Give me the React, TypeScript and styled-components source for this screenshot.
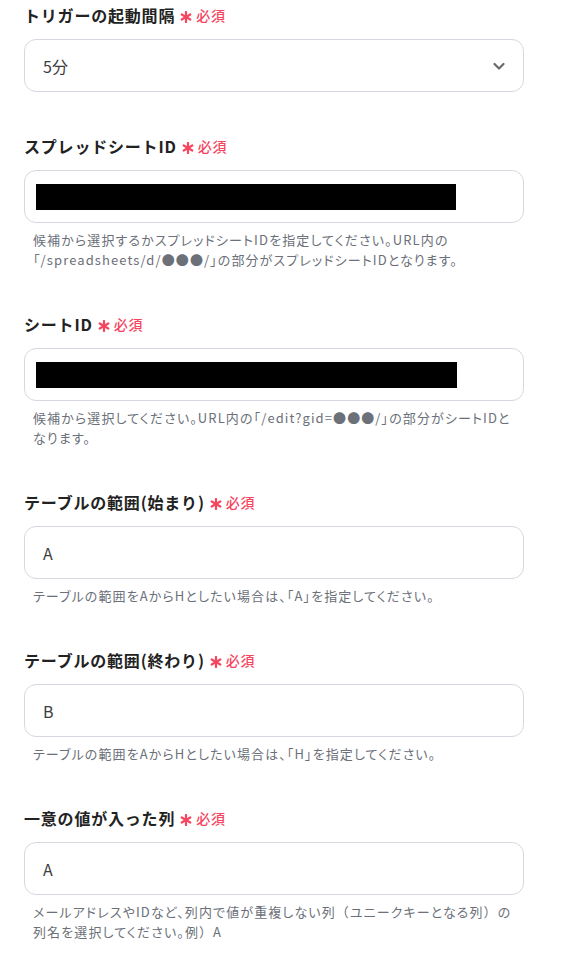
import React from 'react';
import styled, { createGlobalStyle } from 'styled-components';

const GlobalStyle = createGlobalStyle`
  html, body {
    margin: 0;
    padding: 0;
    background: #ffffff;
  }
  body {
    font-family: 'Noto Sans CJK JP', 'Noto Sans', sans-serif;
    -webkit-font-smoothing: antialiased;
  }
`;

const colors = {
  label: '#222222',
  required: '#f5455f',
  border: '#d5d8de',
  value: '#3d3d3d',
  help: '#6b7079',
  chevron: '#6a6a6a',
};

const Form = styled.div`
  width: 500px;
  padding: 3px 24px 0;
`;

const Field = styled.div`
  margin-bottom: 42px;
`;

const LabelRow = styled.div`
  display: flex;
  align-items: center;
  height: 24px;
  margin-bottom: 12px;
`;

const LabelText = styled.span`
  font-size: 16px;
  font-weight: 700;
  letter-spacing: 0.05em;
  color: ${colors.label};
  line-height: 24px;
`;

const Required = styled.span`
  display: inline-flex;
  align-items: center;
  margin-left: 5px;
  color: ${colors.required};
  font-size: 14px;
  font-weight: 500;
  letter-spacing: 0.06em;
  line-height: 24px;
`;

const AsteriskIcon = styled.svg`
  width: 12px;
  height: 12px;
  margin-right: 4px;
  margin-top: 3px;
`;

const Box = styled.div`
  box-sizing: border-box;
  position: relative;
  display: flex;
  align-items: center;
  justify-content: space-between;
  height: 53px;
  padding: 0 18px;
  border: 1px solid ${colors.border};
  border-radius: 12px;
  background: #fff;
`;

const Value = styled.span`
  font-size: 16px;
  color: ${colors.value};
`;

const Redacted = styled.div<{ $width: number }>`
  width: ${(p) => p.$width}px;
  height: 26px;
  margin-left: -7px;
  background: #000;
`;

const Chevron = styled.svg`
  width: 14px;
  height: 14px;
  margin-right: -1px;
`;

const Help = styled.p`
  margin: 7px 0 0;
  padding: 0 8px 0 9px;
  font-size: 13px;
  line-height: 20px;
  letter-spacing: 0.085em;
  font-feature-settings: 'palt';
  color: ${colors.help};
`;

// full-width brackets keep their em box in the reference
const WideParen = styled.span`
  font-feature-settings: normal;
`;

type FieldProps = {
  label: string;
  value?: string;
  redact?: number;
  select?: boolean;
  help?: React.ReactNode;
};

const RequiredMark = () => (
  <Required>
    <AsteriskIcon viewBox="0 0 12 12">
      <g stroke={colors.required} strokeWidth="2.2" strokeLinecap="round">
        <line x1="6" y1="1" x2="6" y2="11" />
        <line x1="1.7" y1="3.5" x2="10.3" y2="8.5" />
        <line x1="1.7" y1="8.5" x2="10.3" y2="3.5" />
      </g>
    </AsteriskIcon>
    必須
  </Required>
);

const FormField: React.FC<FieldProps> = ({ label, value, redact, select, help }) => (
  <Field>
    <LabelRow>
      <LabelText>{label}</LabelText>
      <RequiredMark />
    </LabelRow>
    <Box>
      {redact ? <Redacted $width={redact} /> : <Value>{value}</Value>}
      {select && (
        <Chevron viewBox="0 0 14 14">
          <polyline
            points="2.5,5 7,9.5 11.5,5"
            fill="none"
            stroke={colors.chevron}
            strokeWidth="2.2"
            strokeLinecap="round"
            strokeLinejoin="round"
          />
        </Chevron>
      )}
    </Box>
    {help && <Help>{help}</Help>}
  </Field>
);

const App: React.FC = () => {
  return (
    <>
      <GlobalStyle />
      <Form>
        <FormField label="トリガーの起動間隔" value="5分" select />
        <FormField
          label="スプレッドシートID"
          redact={420}
          help={
            <>
              候補から選択するかスプレッドシートIDを指定してください。URL内の
              <br />
              「/spreadsheets/d/●●●/」の部分がスプレッドシートIDとなります。
            </>
          }
        />
        <FormField
          label="シートID"
          redact={421}
          help="候補から選択してください。URL内の「/edit?gid=●●●/」の部分がシートIDとなります。"
        />
        <FormField
          label="テーブルの範囲(始まり)"
          value="A"
          help="テーブルの範囲をAからHとしたい場合は、「A」を指定してください。"
        />
        <FormField
          label="テーブルの範囲(終わり)"
          value="B"
          help="テーブルの範囲をAからHとしたい場合は、「H」を指定してください。"
        />
        <FormField
          label="一意の値が入った列"
          value="A"
          help={
            <>
              メールアドレスやIDなど、列内で値が重複しない列<WideParen>（</WideParen>ユニークキーとなる列
              <WideParen>）</WideParen>の列名を選択してください。例<WideParen>）</WideParen>A
            </>
          }
        />
      </Form>
    </>
  );
};

export default App;
